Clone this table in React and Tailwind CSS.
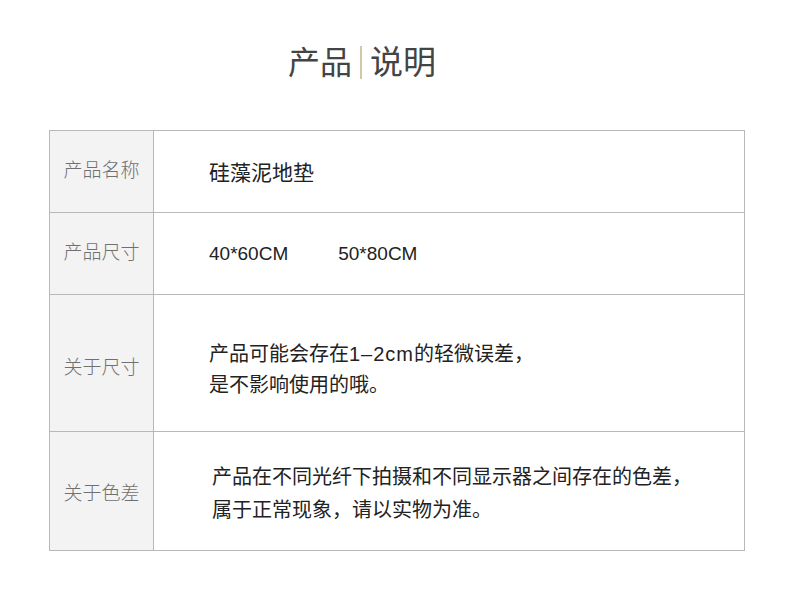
import React from "react";

const font = { fontFamily: '"Liberation Sans", "Noto Sans CJK SC", sans-serif' };

function Row({ label, height, first, labelPad = "", children }) {
  return (
    <div className={`flex ${first ? "" : "border-t border-[#b8b8b8]"} ${height}`}>
      <div className={`w-[104px] shrink-0 bg-[#f3f3f3] border-r border-[#b8b8b8] flex items-center justify-center ${labelPad}`}>
        <span className="text-[19px] text-[#707070] font-light">{label}</span>
      </div>
      <div className="flex-1 flex items-center pl-[55px] text-[19px] text-[#222]">
        {children}
      </div>
    </div>
  );
}

export default function App() {
  return (
    <div className="w-[790px] h-[610px] bg-white" style={font}>
      <div className="pt-[46px] pl-[288px] flex items-center">
        <span className="text-[32px] leading-[32px] text-[#444]">产品</span>
        <span className="mx-[8px] w-[2px] h-[33px] bg-[#d6c6a6]"></span>
        <span className="text-[33px] leading-[32px] text-[#444]">说明</span>
      </div>

      <div className="mt-[51px] ml-[49px] w-[696px] border border-[#b8b8b8]">
        <Row label="产品名称" height="h-[81px]" first>
          <span className="pt-[3px] text-[21px]">硅藻泥地垫</span>
        </Row>
        <Row label="产品尺寸" height="h-[82px]">
          <span className="pt-[2px]">40*60CM</span>
          <span className="ml-[50px] pt-[2px]">50*80CM</span>
        </Row>
        <Row label="关于尺寸" height="h-[137px]" labelPad="pt-[10px]">
          <div className="pt-[14px] text-[20px] leading-[31px]">
            <div>
              产品可能会存在<span className="tracking-[1px]">1–2cm</span>的轻微误差，
            </div>
            <div>是不影响使用的哦。</div>
          </div>
        </Row>
        <Row label="关于色差" height="h-[119px]" labelPad="pt-[6px]">
          <div className="pl-[3px] pt-[6px] text-[20px] leading-[33px]">
            <div>产品在不同光纤下拍摄和不同显示器之间存在的色差，</div>
            <div>属于正常现象，请以实物为准。</div>
          </div>
        </Row>
      </div>
    </div>
  );
}
